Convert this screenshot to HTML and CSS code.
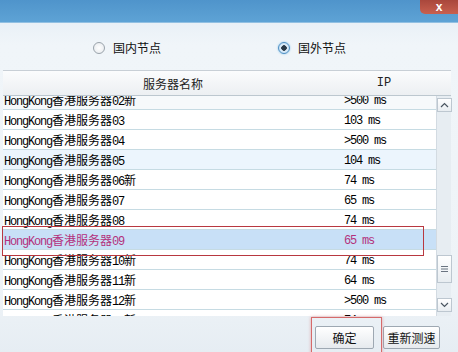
FILE: index.html
```html
<!DOCTYPE html>
<html lang="zh-CN">
<head>
    <meta charset="UTF-8">
    <title>节点选择</title>
    <link rel="stylesheet" href="styles.css">
</head>
<body>
    <div class="window">
        <div class="titlebar">
            <div class="close">x</div>
        </div>

        <div class="nodes">
            <label class="radio"><span class="dot"></span>国内节点</label>
            <label class="radio on"><span class="dot"></span>国外节点</label>
        </div>

        <div class="table">
            <div class="thead">
                <div>服务器名称</div>
                <div class="ip">IP</div>
            </div>
            <div class="tbody">
                <div class="rows">
                    <div class="list">
                        <div class="row"><div>HongKong<span class="cn">香港服务器</span>02<span class="cn">新</span></div><div>&gt;500 ms</div></div>
                        <div class="row"><div>HongKong<span class="cn">香港服务器</span>03</div><div>103 ms</div></div>
                        <div class="row"><div>HongKong<span class="cn">香港服务器</span>04</div><div>&gt;500 ms</div></div>
                        <div class="row hover"><div>HongKong<span class="cn">香港服务器</span>05</div><div>104 ms</div></div>
                        <div class="row"><div>HongKong<span class="cn">香港服务器</span>06<span class="cn">新</span></div><div>74 ms</div></div>
                        <div class="row"><div>HongKong<span class="cn">香港服务器</span>07</div><div>65 ms</div></div>
                        <div class="row"><div>HongKong<span class="cn">香港服务器</span>08</div><div>74 ms</div></div>
                        <div class="row selected"><div>HongKong<span class="cn">香港服务器</span>09</div><div>65 ms</div></div>
                        <div class="row"><div>HongKong<span class="cn">香港服务器</span>10<span class="cn">新</span></div><div>74 ms</div></div>
                        <div class="row"><div>HongKong<span class="cn">香港服务器</span>11<span class="cn">新</span></div><div>64 ms</div></div>
                        <div class="row"><div>HongKong<span class="cn">香港服务器</span>12<span class="cn">新</span></div><div>&gt;500 ms</div></div>
                        <div class="row"><div>HongKong<span class="cn">香港服务器</span>13<span class="cn">新</span></div><div>74 ms</div></div>
                    </div>
                </div>
                <div class="scroll">
                    <div class="sbtn up">
                        <svg width="9" height="6" viewBox="0 0 9 6"><path d="M1 5 L4.5 1.5 L8 5" fill="none" stroke="#4a5560" stroke-width="1.2"/></svg>
                    </div>
                    <div class="thumb">
                        <svg width="9" height="8" viewBox="0 0 9 8"><path d="M1 1.5 H8 M1 4 H8 M1 6.5 H8" stroke="#6a7480" stroke-width="1"/></svg>
                    </div>
                    <div class="sbtn down">
                        <svg width="9" height="6" viewBox="0 0 9 6"><path d="M1 1 L4.5 4.5 L8 1" fill="none" stroke="#4a5560" stroke-width="1.2"/></svg>
                    </div>
                </div>
            </div>
        </div>

        <div class="buttons">
            <div class="btn ok">确定</div>
            <div class="btn">重新测速</div>
        </div>

        <!-- 标注框 -->
        <div class="mark mark-row"></div>
        <div class="mark mark-btn"></div>
    </div>
</body>
</html>
```

FILE: styles.css
```css
* {
    box-sizing: border-box;
}

body {
    margin: 0;
    font-family: "Noto Sans CJK SC", sans-serif;
    font-size: 12px;
    color: #000;
}

.window {
    width: 458px;
    height: 352px;
    position: relative;
    overflow: hidden;
    display: flex;
    flex-direction: column;
    background: linear-gradient(#e3ecf4, #f0f5f9 45px, #eef3f7 290px, #e6edf3);
}

.titlebar {
    height: 23px;
    flex: none;
    background: linear-gradient(#4f94cb, #5ea3d5);
    border-bottom: 1px solid #92c0e2;
    display: flex;
    justify-content: flex-end;
}

.close {
    width: 38px;
    height: 14px;
    border-radius: 0 0 0 5px;
    background: linear-gradient(#a9473c, #c8604f);
    color: #fff;
    font: bold 12px/14px "Liberation Sans", sans-serif;
    text-align: center;
}

/* 节点选择 */
.nodes {
    height: 47px;
    flex: none;
    display: flex;
    align-items: center;
    padding: 3px 0 0 93px;
}

.radio {
    display: flex;
    align-items: center;
    gap: 8px;
    color: #111;
    line-height: 14px;
}

.radio + .radio {
    margin-left: 117px;
}

.dot {
    width: 12px;
    height: 12px;
    border-radius: 50%;
    border: 1px solid #9aa3ab;
    background: radial-gradient(#ffffff, #e4e8ec);
}

.radio.on .dot {
    border-color: #4c8fc4;
    background: radial-gradient(#2a3a48 0 2.5px, #dfeefa 3px, #b7d6ee);
    box-shadow: 0 0 2px #7fbde8;
}

/* 表格 */
.table {
    margin: 0 7px 0 3px;
    flex: none;
}

.thead {
    height: 26px;
    display: grid;
    grid-template-columns: 340px 82px 1fr;
    align-items: center;
    text-align: center;
    border-top: 1px solid #c8cfd6;
    border-bottom: 1px solid #bcc7cf;
    background: linear-gradient(#fbfcfd, #eceff2);
    color: #222;
}

.thead .ip {
    font: 12px "Liberation Mono", monospace;
}

.tbody {
    height: 220px;
    display: flex;
}

.rows {
    flex: 1;
    overflow: hidden;
    background: #fff;
}

.list {
    margin-top: -6px;
}

.row {
    height: 20px;
    display: grid;
    grid-template-columns: 341px 1fr;
    align-items: center;
    border-bottom: 1px solid #c6dbe3;
    font: 12px/19px "Liberation Mono", monospace;
    letter-spacing: -1.2px;
    white-space: nowrap;
}

.row > div:first-child {
    padding-left: 1px;
}

.cn {
    font: 12px/19px "Noto Sans CJK SC", sans-serif;
    letter-spacing: 0;
}

.row:first-child {
    background: #f6f9fb;
}

.row.hover {
    background: #ecf5fd;
}

.row.selected {
    background: #c8e0f7;
    color: #b3307c;
}

/* 滚动条 */
.scroll {
    width: 15px;
    flex: none;
    background: #e7edf2;
    border-left: 1px solid #d3dbe2;
    display: flex;
    flex-direction: column;
    align-items: center;
}

.sbtn,
.thumb {
    width: 15px;
    border: 1px solid #bdc7d0;
    background: linear-gradient(#ffffff, #e8edf1);
    display: flex;
    align-items: center;
    justify-content: center;
}

.sbtn {
    height: 14px;
}

.up {
    margin-top: 2px;
}

.thumb {
    height: 28px;
    margin-top: 143px;
}

.down {
    margin-top: 15px;
}

/* 按钮 */
.buttons {
    flex: 1;
    display: flex;
    justify-content: flex-end;
    align-items: flex-start;
    gap: 9px;
    padding: 10px 18px 0 0;
}

.btn {
    width: 57px;
    height: 23px;
    border: 1px solid #9ea8b2;
    border-radius: 2px;
    background: linear-gradient(#ffffff, #e6eaee);
    font-size: 12px;
    line-height: 21px;
    text-align: center;
    color: #111;
    white-space: nowrap;
}

.btn.ok {
    width: 59px;
}

/* 标注框 */
.mark {
    position: absolute;
    border: 1px solid #b83840;
}

.mark-row {
    left: 2px;
    top: 226px;
    width: 422px;
    height: 30px;
}

.mark-btn {
    left: 311px;
    top: 317px;
    width: 71px;
    height: 40px;
    border-color: #d66a6a;
    box-shadow: 0 0 3px rgba(220, 90, 90, 0.5);
}
```
